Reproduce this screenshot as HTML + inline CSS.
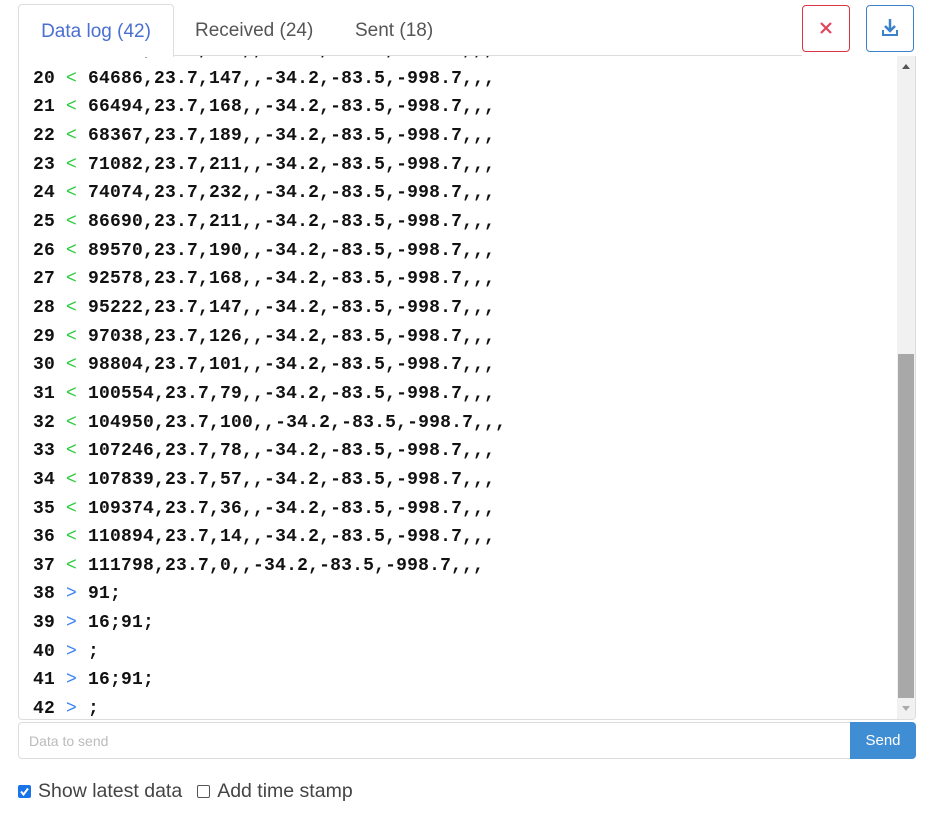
<!DOCTYPE html><html><head><style>
body{margin:0;background:#fff;font-family:"Liberation Sans",sans-serif;width:930px;height:814px;position:relative;overflow:hidden}
.tab{position:absolute;top:4px;height:52px;line-height:54px;font-size:19px;color:#555}
.act{left:18px;width:154px;border:1px solid #ddd;border-bottom:none;border-radius:4px 4px 0 0;background:#fff;color:#4a6fd0;text-align:center;z-index:2;height:52px}
.line{position:absolute;left:18px;top:55px;width:784px;border-top:1px solid #ddd}
.btn{position:absolute;top:5px;width:48px;height:47px;border-radius:4px;box-sizing:border-box;background:#fff}
.box{position:absolute;left:18px;top:56px;width:898px;height:664px;border:1px solid #ddd;border-top:none;box-sizing:border-box;overflow:hidden;border-radius:0 0 4px 4px}
.log{position:absolute;left:14px;top:-20px;font-family:"Liberation Mono",monospace;font-size:18px;letter-spacing:0.2px;font-weight:bold;line-height:28.65px;color:#111;white-space:pre}
.g{color:#2ecc40;font-weight:normal}.b{color:#3b82f6;font-weight:normal}
.sb{position:absolute;left:878px;top:0;width:18px;height:663px;background:#f1f1f1}
.th{position:absolute;left:1px;top:298px;width:16px;height:344px;background:#a8a8a8}
</style></head><body>
<div class="tab act">Data log (42)</div>
<div class="tab" style="left:195px">Received (24)</div>
<div class="tab" style="left:355px">Sent (18)</div>
<div class="line"></div>
<div class="btn" style="left:802px;border:1px solid #dc3545"><svg width="46" height="45" viewBox="0 0 46 45"><path d="M18 17l10 10M28 17l-10 10" stroke="#e0455a" stroke-width="2.2"/></svg></div>
<div class="btn" style="left:866px;border:1px solid #3b82c8"><svg width="46" height="45" viewBox="0 0 46 45"><path d="M23 13v12M18 20l5 5 5-5" stroke="#3b82c8" stroke-width="2.5" fill="none"/><path d="M15 24v6h16v-6h-2v4h-12v-4z" fill="#3b82c8"/></svg></div>
<div class="box">
<div class="log">   <span class="g"> </span> 62911,23.7,126,,-34.2,-83.5,-998.7,,,
20 <span class="g">&lt;</span> 64686,23.7,147,,-34.2,-83.5,-998.7,,,
21 <span class="g">&lt;</span> 66494,23.7,168,,-34.2,-83.5,-998.7,,,
22 <span class="g">&lt;</span> 68367,23.7,189,,-34.2,-83.5,-998.7,,,
23 <span class="g">&lt;</span> 71082,23.7,211,,-34.2,-83.5,-998.7,,,
24 <span class="g">&lt;</span> 74074,23.7,232,,-34.2,-83.5,-998.7,,,
25 <span class="g">&lt;</span> 86690,23.7,211,,-34.2,-83.5,-998.7,,,
26 <span class="g">&lt;</span> 89570,23.7,190,,-34.2,-83.5,-998.7,,,
27 <span class="g">&lt;</span> 92578,23.7,168,,-34.2,-83.5,-998.7,,,
28 <span class="g">&lt;</span> 95222,23.7,147,,-34.2,-83.5,-998.7,,,
29 <span class="g">&lt;</span> 97038,23.7,126,,-34.2,-83.5,-998.7,,,
30 <span class="g">&lt;</span> 98804,23.7,101,,-34.2,-83.5,-998.7,,,
31 <span class="g">&lt;</span> 100554,23.7,79,,-34.2,-83.5,-998.7,,,
32 <span class="g">&lt;</span> 104950,23.7,100,,-34.2,-83.5,-998.7,,,
33 <span class="g">&lt;</span> 107246,23.7,78,,-34.2,-83.5,-998.7,,,
34 <span class="g">&lt;</span> 107839,23.7,57,,-34.2,-83.5,-998.7,,,
35 <span class="g">&lt;</span> 109374,23.7,36,,-34.2,-83.5,-998.7,,,
36 <span class="g">&lt;</span> 110894,23.7,14,,-34.2,-83.5,-998.7,,,
37 <span class="g">&lt;</span> 111798,23.7,0,,-34.2,-83.5,-998.7,,,
38 <span class="b">&gt;</span> 91;
39 <span class="b">&gt;</span> 16;91;
40 <span class="b">&gt;</span> ;
41 <span class="b">&gt;</span> 16;91;
42 <span class="b">&gt;</span> ;</div>
<div class="sb"><div style="position:absolute;left:5px;top:8px;border:4px solid transparent;border-bottom:5px solid #555;border-top:none"></div><div class="th"></div><div style="position:absolute;left:5px;top:650px;border:4px solid transparent;border-top:5px solid #aaa;border-bottom:none"></div></div>
</div>
<div style="position:absolute;left:18px;top:722px;width:833px;height:37px;border:1px solid #ddd;box-sizing:border-box;border-radius:4px 0 0 4px;font-size:14px;color:#bbb;line-height:37px;padding-left:10px">Data to send</div>
<div style="position:absolute;left:850px;top:722px;width:66px;height:37px;background:#3f8dd3;color:#fff;font-size:15px;line-height:38px;text-align:center;border-radius:0 4px 4px 0">Send</div>
<div style="position:absolute;left:18px;top:780px;font-size:19.5px;color:#444;display:flex;align-items:center">
<span style="width:13px;height:13px;background:#1a73e8;border-radius:2px;display:inline-block;position:relative;margin-right:7px"><svg width="13" height="13" style="position:absolute;left:0;top:0"><path d="M3 6.5l2.5 3 4.5-6" stroke="#fff" stroke-width="2" fill="none"/></svg></span>Show latest data
<span style="width:11px;height:11px;border:1px solid #555;border-radius:2px;display:inline-block;margin:0 7px 0 15px"></span>Add time stamp</div>
</body></html>
